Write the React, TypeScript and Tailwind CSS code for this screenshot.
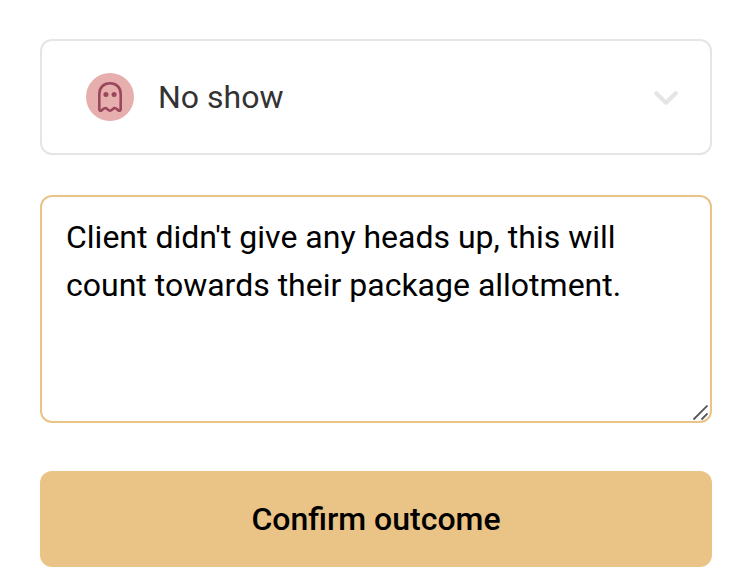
import { useState } from "react";

function GhostIcon() {
  return (
    <svg width="48" height="48" viewBox="0 0 48 48" fill="none">
      <path
        d="M13.3 36.4V21C13.3 14.6 17.6 10.3 24 10.3S34.7 14.6 34.7 21V36.4C34.7 37.7 33.3 38.2 32.2 37.2L31.2 36.3Q28.2 34 27 36L25.2 37.3Q24 38.2 22.8 37.3L21 36Q19.8 34 16.8 36.3L15.8 37.2C14.7 38.2 13.3 37.7 13.3 36.4Z"
        stroke="#9a475c"
        strokeWidth="2.6"
        strokeLinecap="round"
        strokeLinejoin="round"
      />
      <circle cx="19.9" cy="21.4" r="2.5" fill="#9a475c" />
      <circle cx="28.1" cy="21.4" r="2.5" fill="#9a475c" />
    </svg>
  );
}

function OutcomeSelect() {
  return (
    <button
      type="button"
      className="flex h-[116px] w-full items-center rounded-xl border-2 border-[#e5e5e5] bg-white pr-8 pl-11"
    >
      <span className="size-12 shrink-0 rounded-full bg-[#e7aeae]">
        <GhostIcon />
      </span>
      <span className="ml-6 flex-1 text-left text-[32px] leading-12 text-[#333333]">No show</span>
      <svg className="mt-0.5" width="24" height="16" viewBox="0 0 24 16" fill="none">
        <path d="M2.3 3.3L12 12.7L21.7 3.3" stroke="#e5e5e5" strokeWidth="4.2" strokeLinecap="round" strokeLinejoin="round" />
      </svg>
    </button>
  );
}

export default function App() {
  const [note, setNote] = useState(
    "Client didn't give any heads up, this will count towards their package allotment."
  );

  return (
    <div className="flex h-[578px] w-[738px] flex-col overflow-hidden bg-white pt-[39px] pr-[26px] pl-10 font-[Roboto,sans-serif]">
      <OutcomeSelect />

      <div className="relative mt-10 h-[228px]">
        <textarea
          value={note}
          onChange={(e) => setNote(e.target.value)}
          spellCheck={false}
          className="block h-full w-full resize-none rounded-xl border-2 border-[#eac387] bg-white px-6 py-4 text-[32px] leading-12 text-black outline-none"
        />
        {/* resize grip */}
        <svg className="pointer-events-none absolute right-1 bottom-0.5" width="16" height="16" viewBox="0 0 16 16">
          <path d="M1.5 14.5L15.5 0.5M9.5 14.5L15.5 8.5" stroke="#56565b" strokeWidth="1.8" fill="none" />
        </svg>
      </div>

      <button
        type="button"
        className="mt-12 h-24 w-full shrink-0 rounded-xl bg-[#eac387] text-[32px] leading-12 font-medium text-black"
      >
        Confirm outcome
      </button>
    </div>
  );
}
